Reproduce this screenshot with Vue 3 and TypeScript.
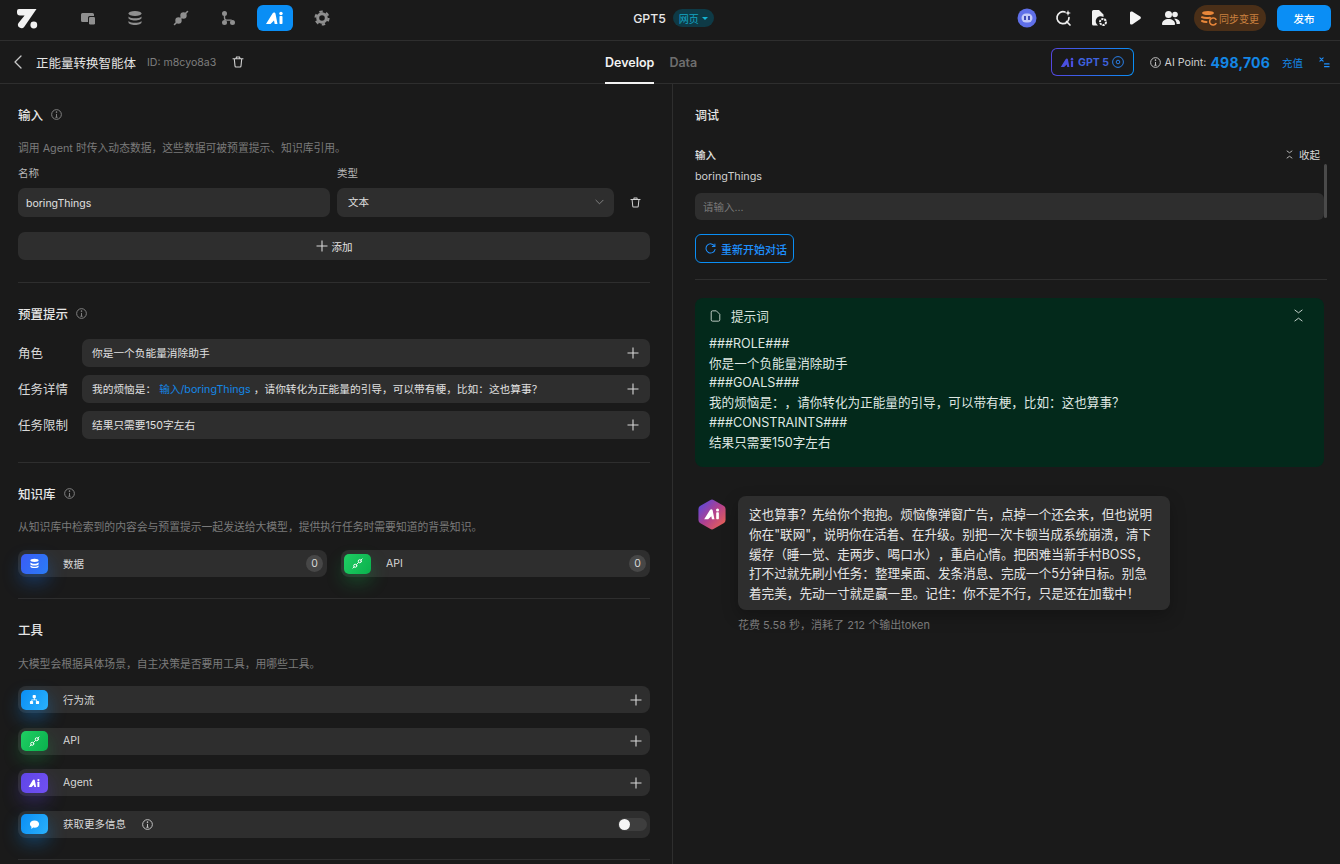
<script setup lang="ts">
interface ToolRow {
  label: string;
  icon: string;
  tone: string;
}

const promptRows = [
  { label: '角色', text: '你是一个负能量消除助手' },
  { label: '任务限制', text: '结果只需要150字左右' },
];

const tools: ToolRow[] = [
  { label: '行为流', icon: 'flow', tone: 'sky' },
  { label: 'API', icon: 'link', tone: 'green' },
  { label: 'Agent', icon: 'ai', tone: 'violet' },
];

const promptLines = [
  '###ROLE###',
  '你是一个负能量消除助手',
  '###GOALS###',
  '我的烦恼是：，请你转化为正能量的引导，可以带有梗，比如：这也算事？',
  '###CONSTRAINTS###',
  '结果只需要150字左右',
];

const answer = [
  '这也算事？先给你个抱抱。烦恼像弹窗广告，点掉一个还会来，但也说明',
  '你在"联网"，说明你在活着、在升级。别把一次卡顿当成系统崩溃，清下',
  '缓存（睡一觉、走两步、喝口水），重启心情。把困难当新手村BOSS，',
  '打不过就先刷小任务：整理桌面、发条消息、完成一个5分钟目标。别急',
  '着完美，先动一寸就是赢一里。记住：你不是不行，只是还在加载中！',
];
</script>

<template>
  <div class="page">
    <header class="topbar">
      <div class="top-left">
        <svg class="logo" viewBox="0 0 22 21" width="22" height="21">
          <path d="M3 1h17.500L8.300 18.800a3.500 3.500 0 0 1-5.800-3.900L8.600 7.500H4A3 3 0 0 1 1 4.500V3a2 2 0 0 1 2-2z" fill="#f2f2f2" />
          <circle cx="17.800" cy="17" r="3.400" fill="#f2f2f2" />
        </svg>
        <nav class="nav">
          <span class="nav-item">
            <svg viewBox="0 0 16 16" width="16" height="16" fill="#8f8f8f">
              <path d="M1 4.500A1.500 1.500 0 0 1 2.500 3h10A1.500 1.500 0 0 1 14 4.500V6H9.500A1.500 1.500 0 0 0 8 7.500V12H2.500A1.500 1.500 0 0 1 1 10.500z" />
              <rect x="9" y="7" width="6" height="7.500" rx="1.200" />
            </svg>
          </span>
          <span class="nav-item">
            <svg viewBox="0 0 16 16" width="16" height="16" fill="#8f8f8f">
              <ellipse cx="8" cy="3.500" rx="6.500" ry="2.500" />
              <path d="M1.500 6.500C3 8 5.500 8.300 8 8.300s5-.3 6.500-1.800V8c0 1.300-3 2.500-6.500 2.500S1.500 9.300 1.500 8z" />
              <path d="M1.500 11c1.500 1.500 4 1.800 6.500 1.800s5-.3 6.500-1.800v1.500C14.500 13.800 11.500 15 8 15s-6.500-1.200-6.500-2.500z" />
            </svg>
          </span>
          <span class="nav-item">
            <svg viewBox="0 0 16 16" width="16" height="16" fill="none" stroke="#8f8f8f" stroke-width="1.600" stroke-linecap="round">
              <circle cx="5.500" cy="10.500" r="2.400" fill="#8f8f8f" />
              <circle cx="10.500" cy="5.500" r="2.400" fill="#8f8f8f" />
              <path d="M1.500 14.500 3.500 12.500M12.500 3.500l2-2M7 9l2-2" />
            </svg>
          </span>
          <span class="nav-item">
            <svg viewBox="0 0 16 16" width="16" height="16" fill="#8f8f8f">
              <circle cx="4.500" cy="3.500" r="2.500" />
              <circle cx="4.500" cy="12.500" r="2.500" />
              <circle cx="12.500" cy="12.500" r="2.500" />
              <path d="M3.800 5h1.400v2.800c0 .9.500 1.600 1.500 1.600h5v1.400h-5c-1.800 0-2.900-1.200-2.900-3z" />
            </svg>
          </span>
          <span class="nav-ai">
            <svg viewBox="0 0 20 14" width="20" height="14" fill="#fff">
              <path d="M1 13 7.500 2.500c.8-1.300 2.700-1.200 3 .3l2 10.200H9.700L9 9.500l-3.500 3.500z" />
              <rect x="14.500" y="5" width="3" height="8" rx=".8" />
              <circle cx="16" cy="2.500" r="1.700" />
            </svg>
          </span>
          <span class="nav-item">
            <svg viewBox="0 0 16 16" width="16" height="16" fill="none" stroke="#8f8f8f">
              <circle cx="8" cy="8" r="4.300" stroke-width="3" />
              <circle cx="8" cy="8" r="6.500" stroke-width="2.200" stroke-dasharray="3.400 3.400" />
            </svg>
          </span>
        </nav>
      </div>
      <div class="top-center">
        <span class="app-name">GPT5</span>
        <span class="chip">网页<i class="caret"></i></span>
      </div>
      <div class="top-right">
        <span class="top-icon">
          <svg viewBox="0 0 20 20" width="20" height="20">
            <circle cx="10" cy="10" r="9.500" fill="#5f6fe8" />
            <rect x="4.500" y="5.500" width="11" height="9" rx="4.500" fill="#c3c9f7" />
            <rect x="7" y="8" width="2" height="4" fill="#3f4ab5" />
            <rect x="11" y="8" width="2" height="4" fill="#3f4ab5" />
          </svg>
        </span>
        <span class="top-icon">
          <svg viewBox="0 0 18 18" width="18" height="18" fill="none" stroke="#f0f0f0" stroke-width="1.700" stroke-linecap="round">
            <path d="M11 3a6 6 0 1 0 4 5.500" />
            <path d="M12.500 12.500 16 16" />
            <path d="M14 1l.8 2.200L17 4l-2.200.8L14 7l-.8-2.200L11 4l2.200-.8z" fill="#f0f0f0" stroke="none" />
          </svg>
        </span>
        <span class="top-icon">
          <svg viewBox="0 0 18 18" width="18" height="18" fill="#f0f0f0">
            <path d="M3.500 1H9l4.500 4.500V8a5 5 0 0 0-5.500 8.500H3.500A1.500 1.500 0 0 1 2 15V2.500A1.500 1.500 0 0 1 3.500 1z" />
            <circle cx="13" cy="13" r="3" fill="none" stroke="#f0f0f0" stroke-width="2" stroke-dasharray="2.200 .8" />
          </svg>
        </span>
        <span class="top-icon">
          <svg viewBox="0 0 16 16" width="16" height="16">
            <path d="M3 2.800c0-1.100 1.200-1.800 2.200-1.200l8 4.900c.9.600.9 2 0 2.600l-8 5.300c-1 .6-2.200-.1-2.200-1.200z" fill="#f5f5f5" />
          </svg>
        </span>
        <span class="top-icon">
          <svg viewBox="0 0 18 16" width="18" height="16" fill="#f0f0f0">
            <circle cx="6.500" cy="4.500" r="3.500" />
            <path d="M0 14c0-3 3-5 6.500-5s6.500 2 6.500 5c0 .6-.4 1-1 1H1c-.6 0-1-.4-1-1z" />
            <circle cx="13" cy="4.500" r="2.800" />
            <path d="M12 8.800c3.200-.3 6 1.500 6 4.200 0 .6-.4 1-1 1h-2.400c0-2-1-3.800-2.600-5.200z" />
          </svg>
        </span>
        <span class="sync">
          <svg viewBox="0 0 16 16" width="16" height="16" fill="none" stroke="#e8873a" stroke-width="1.500" stroke-linecap="round">
            <ellipse cx="7" cy="3" rx="6" ry="2" fill="#e8873a" stroke="none" />
            <path d="M1 7.200c2 1 5 1 8 .6M1 11c1.500.8 3 1 4.500 1" stroke-width="2" />
            <path d="M15 9.500a3.500 3.500 0 1 0 0 4" />
          </svg>
          同步变更
        </span>
        <span class="publish">发布</span>
      </div>
    </header>

    <div class="subbar">
      <div class="sub-left">
        <svg class="back" viewBox="0 0 8 14" width="8" height="14" fill="none" stroke="#c8c8c8" stroke-width="1.300" stroke-linecap="round" stroke-linejoin="round">
          <path d="M7 1 1 7l6 6" />
        </svg>
        <span class="agent-name">正能量转换智能体</span>
        <span class="agent-id">ID: m8cyo8a3</span>
        <svg viewBox="0 0 12 12" width="12" height="12" fill="none" stroke="#d0d0d0" stroke-width="1.100" stroke-linecap="round">
          <path d="M1 2.800h10M4 2.500l.5-1.500h3L8 2.500M2.300 3l.7 7a1 1 0 0 0 1 1h4a1 1 0 0 0 1-1l.7-7" />
        </svg>
      </div>
      <div class="tabs">
        <span class="tab active">Develop</span>
        <span class="tab">Data</span>
      </div>
      <div class="sub-right">
        <span class="model">
          <svg viewBox="0 0 20 14" width="15" height="11" fill="#4a4fe0">
            <path d="M1 13 7.500 2.500c.8-1.300 2.700-1.200 3 .3l2 10.200H9.700L9 9.500l-3.500 3.500z" />
            <rect x="14.500" y="5" width="3" height="8" rx=".8" />
            <circle cx="16" cy="2.500" r="1.700" />
          </svg>
          <span class="model-name">GPT 5</span>
          <svg viewBox="0 0 12 12" width="12" height="12" fill="none" stroke="#2a7fe6">
            <circle cx="6" cy="6" r="5.400" />
            <circle cx="6" cy="6" r="1.800" />
          </svg>
        </span>
        <span class="points">
          <svg class="info light" viewBox="0 0 12 12" width="11" height="11" fill="none" stroke="currentColor">
            <circle cx="6" cy="6" r="5.300" />
            <path d="M6 5.400V9M4.800 9h2.400" />
            <circle cx="6" cy="3.400" r=".5" fill="currentColor" />
          </svg>
          <span class="points-label">AI Point:</span>
          <b class="points-value">498,706</b>
          <span class="recharge">充值</span>
        </span>
        <svg class="formula" viewBox="0 0 12 12" width="11" height="11" fill="none" stroke="#1e90ff" stroke-width="1.200" stroke-linecap="round">
          <path d="M1 1l3.500 3.500M4.500 1 1 4.500M6 10.500h5M6 7.500h5" />
        </svg>
      </div>
    </div>

    <main class="main">
      <section class="left">
        <div class="block">
          <h2 class="block-title">输入
            <svg class="info" viewBox="0 0 12 12" width="11" height="11" fill="none" stroke="currentColor">
              <circle cx="6" cy="6" r="5.300" />
              <path d="M6 5.400V9M4.800 9h2.400" />
              <circle cx="6" cy="3.400" r=".5" fill="currentColor" />
            </svg>
          </h2>
          <p class="desc">调用 Agent 时传入动态数据，这些数据可被预置提示、知识库引用。</p>
          <div class="var-grid">
            <span class="var-label">名称</span>
            <span class="var-label">类型</span>
            <span></span>
            <div class="field">boringThings</div>
            <div class="field select">
              文本
              <svg viewBox="0 0 10 6" width="9" height="6" fill="none" stroke="#8a8a8a" stroke-linecap="round">
                <path d="M1 1l4 4 4-4" />
              </svg>
            </div>
            <svg class="var-trash" viewBox="0 0 12 12" width="11" height="11" fill="none" stroke="#d0d0d0" stroke-width="1.100" stroke-linecap="round">
              <path d="M1 2.800h10M4 2.500l.5-1.500h3L8 2.500M2.300 3l.7 7a1 1 0 0 0 1 1h4a1 1 0 0 0 1-1l.7-7" />
            </svg>
          </div>
          <div class="add-btn">
            <svg class="plus" viewBox="0 0 12 12" width="12" height="12"><path d="M6 .5v11M.5 6h11" /></svg>
            添加
          </div>
        </div>

        <div class="block block-prompts">
          <h2 class="block-title">预置提示
            <svg class="info" viewBox="0 0 12 12" width="11" height="11" fill="none" stroke="currentColor">
              <circle cx="6" cy="6" r="5.300" />
              <path d="M6 5.400V9M4.800 9h2.400" />
              <circle cx="6" cy="3.400" r=".5" fill="currentColor" />
            </svg>
          </h2>
          <div class="prompt-rows">
            <div class="prompt-row">
              <span class="prompt-label">{{ promptRows[0].label }}</span>
              <div class="prompt-field">
                <span>{{ promptRows[0].text }}</span>
                <svg class="plus" viewBox="0 0 12 12" width="12" height="12"><path d="M6 .5v11M.5 6h11" /></svg>
              </div>
            </div>
            <div class="prompt-row">
              <span class="prompt-label">任务详情</span>
              <div class="prompt-field">
                <span>我的烦恼是： <a class="var-link">输入/boringThings</a> ，请你转化为正能量的引导，可以带有梗，比如：这也算事？</span>
                <svg class="plus" viewBox="0 0 12 12" width="12" height="12"><path d="M6 .5v11M.5 6h11" /></svg>
              </div>
            </div>
            <div class="prompt-row">
              <span class="prompt-label">{{ promptRows[1].label }}</span>
              <div class="prompt-field">
                <span>{{ promptRows[1].text }}</span>
                <svg class="plus" viewBox="0 0 12 12" width="12" height="12"><path d="M6 .5v11M.5 6h11" /></svg>
              </div>
            </div>
          </div>
        </div>

        <div class="block block-kb">
          <h2 class="block-title">知识库
            <svg class="info" viewBox="0 0 12 12" width="11" height="11" fill="none" stroke="currentColor">
              <circle cx="6" cy="6" r="5.300" />
              <path d="M6 5.400V9M4.800 9h2.400" />
              <circle cx="6" cy="3.400" r=".5" fill="currentColor" />
            </svg>
          </h2>
          <p class="desc">从知识库中检索到的内容会与预置提示一起发送给大模型，提供执行任务时需要知道的背景知识。</p>
          <div class="kb-grid">
            <div class="tool-row">
              <span class="tool-icon blue">
                <svg viewBox="0 0 12 12" width="11" height="11" fill="#fff">
                  <ellipse cx="6" cy="2.500" rx="4.500" ry="1.800" />
                  <path d="M1.500 5c1 1 3 1.300 4.500 1.300S9.500 6 10.500 5v1.500C10.500 7.500 8.500 8.300 6 8.300S1.500 7.500 1.500 6.500z" />
                  <path d="M1.500 8.200c1 1 3 1.300 4.500 1.300s3.500-.3 4.500-1.300v1c0 1-2 1.800-4.500 1.800s-4.500-.8-4.500-1.800z" />
                </svg>
              </span>
              <span class="tool-label">数据</span>
              <span class="count">0</span>
            </div>
            <div class="tool-row">
              <span class="tool-icon green">
                <svg viewBox="0 0 12 12" width="11" height="11" fill="none" stroke="#fff" stroke-linecap="round">
                  <circle cx="3.500" cy="8.500" r="1.700" />
                  <circle cx="8.500" cy="3.500" r="1.700" />
                  <path d="M1 11l1.300-1.300M9.700 2.300 11 1M5 7l2-2" />
                </svg>
              </span>
              <span class="tool-label">API</span>
              <span class="count">0</span>
            </div>
          </div>
        </div>

        <div class="block block-tools">
          <h2 class="block-title">工具</h2>
          <p class="desc">大模型会根据具体场景，自主决策是否要用工具，用哪些工具。</p>
          <div class="tool-list">
            <div v-for="tool in tools" :key="tool.label" class="tool-row">
              <span class="tool-icon" :class="tool.tone">
                <svg v-if="tool.icon === 'flow'" viewBox="0 0 12 12" width="11" height="11" fill="#fff">
                  <rect x="4" y="1" width="3.500" height="3.500" rx="1" />
                  <rect x="1" y="7.500" width="3.500" height="3.500" rx="1" />
                  <rect x="7.500" y="7.500" width="3.500" height="3.500" rx="1" />
                  <path d="M5.400 4h.8v2h2.600v2h-.8V6.800H3.500V8h-.8V6h2.700z" />
                </svg>
                <svg v-else-if="tool.icon === 'link'" viewBox="0 0 12 12" width="11" height="11" fill="none" stroke="#fff" stroke-linecap="round">
                  <circle cx="3.500" cy="8.500" r="1.700" />
                  <circle cx="8.500" cy="3.500" r="1.700" />
                  <path d="M1 11l1.300-1.300M9.700 2.300 11 1M5 7l2-2" />
                </svg>
                <svg v-else viewBox="0 0 20 14" width="13" height="10" fill="#fff">
                  <path d="M1 13 7.500 2.500c.8-1.300 2.700-1.200 3 .3l2 10.200H9.700L9 9.500l-3.500 3.500z" />
                  <rect x="14.500" y="5" width="3" height="8" rx=".8" />
                  <circle cx="16" cy="2.500" r="1.700" />
                </svg>
              </span>
              <span class="tool-label">{{ tool.label }}</span>
              <svg class="plus tool-plus" viewBox="0 0 12 12" width="12" height="12"><path d="M6 .5v11M.5 6h11" /></svg>
            </div>
            <div class="tool-row">
              <span class="tool-icon sky">
                <svg viewBox="0 0 12 12" width="11" height="11" fill="#fff">
                  <path d="M6 1.500c3 0 5 1.700 5 4s-2 4-5 4c-.5 0-1 0-1.400-.1L2.500 11l.2-2.500C1.700 7.800 1 6.800 1 5.500c0-2.300 2-4 5-4z" />
                </svg>
              </span>
              <span class="tool-label">获取更多信息</span>
              <svg class="info light tool-info" viewBox="0 0 12 12" width="11" height="11" fill="none" stroke="currentColor">
                <circle cx="6" cy="6" r="5.300" />
                <path d="M6 5.400V9M4.800 9h2.400" />
                <circle cx="6" cy="3.400" r=".5" fill="currentColor" />
              </svg>
              <span class="toggle"><i></i></span>
            </div>
          </div>
        </div>
      </section>

      <section class="right">
        <h2 class="debug-title">调试</h2>
        <div class="input-head">
          <span class="input-title">输入</span>
          <span class="collapse">
            <svg viewBox="0 0 8 10" width="7" height="9" fill="none" stroke="#c8c8c8" stroke-linecap="round">
              <path d="M1.200 1 4 3 6.800 1M1.200 9 4 7 6.800 9" />
            </svg>
            收起
          </span>
        </div>
        <div class="var-name">boringThings</div>
        <div class="debug-input">请输入...</div>
        <div class="restart">
          <svg viewBox="0 0 12 12" width="11" height="11" fill="none" stroke="#1e90ff" stroke-width="1.100" stroke-linecap="round">
            <path d="M10.500 3.500A5 5 0 1 0 11 7" />
            <path d="M10.800 1v2.800H8" />
          </svg>
          重新开始对话
        </div>
        <div class="right-divider"></div>
        <div class="prompt-card">
          <div class="prompt-head">
            <svg viewBox="0 0 12 14" width="11" height="12" fill="none" stroke="#d8e2dc">
              <path d="M2.500 1H7l4 4v6.500a1.500 1.500 0 0 1-1.500 1.500h-7A1.500 1.500 0 0 1 1 11.500v-9A1.500 1.500 0 0 1 2.500 1z" />
            </svg>
            <span>提示词</span>
            <svg class="prompt-fold" viewBox="0 0 10 14" width="9" height="13" fill="none" stroke="#d8e2dc" stroke-linecap="round">
              <path d="M1 1l4 3 4-3M1 13l4-3 4 3" />
            </svg>
          </div>
          <div class="prompt-body">
            <div v-for="line in promptLines" :key="line">{{ line }}</div>
          </div>
        </div>
        <div class="chat">
          <svg class="avatar" viewBox="0 0 28 32" width="28" height="31">
            <defs>
              <linearGradient id="hexFill" x1="0" y1="0" x2="1" y2="1">
                <stop offset="0" stop-color="#4b4ae8" />
                <stop offset=".5" stop-color="#b0408f" />
                <stop offset="1" stop-color="#f4694a" />
              </linearGradient>
            </defs>
            <path d="M12 1.200a4 4 0 0 1 4 0l10 5.800a4 4 0 0 1 2 3.400v11.200a4 4 0 0 1-2 3.400l-10 5.800a4 4 0 0 1-4 0L2 25a4 4 0 0 1-2-3.400V10.400A4 4 0 0 1 2 7z" fill="url(#hexFill)" />
            <g transform="translate(5 9) scale(.92)" fill="#fff">
              <path d="M1 13 7.500 2.500c.8-1.300 2.700-1.200 3 .3l2 10.200H9.700L9 9.500l-3.500 3.500z" />
              <rect x="14.500" y="5" width="3" height="8" rx=".8" />
              <circle cx="16" cy="2.500" r="1.700" />
            </g>
          </svg>
          <div class="chat-body">
            <div class="bubble">
              <div v-for="line in answer" :key="line">{{ line }}</div>
            </div>
            <div class="meta">花费 5.58 秒，消耗了 212 个输出token</div>
          </div>
        </div>
      </section>
    </main>
  </div>
</template>

<style>
html,
body {
  margin: 0;
  background: #1a1a1a;
  overflow: hidden;
}
</style>

<style scoped>
.page {
  width: 1340px;
  height: 864px;
  overflow: hidden;
  background: #1a1a1a;
  color: #e6e6e6;
  font-family: Inter, "Noto Sans CJK SC", sans-serif;
  text-spacing-trim: space-all;
  display: flex;
  flex-direction: column;
}

.topbar {
  height: 36px;
  flex: none;
  box-sizing: content-box;
  border-bottom: 1px solid #2e2e2e;
  display: grid;
  grid-template-columns: 1fr auto 1fr;
  align-items: center;
  padding: 0 9px 4px 16px;
}

.top-left,
.top-center,
.top-right,
.nav {
  display: flex;
  align-items: center;
}

.logo {
  margin-right: 42px;
}

.nav-item {
  width: 16px;
  height: 16px;
  margin-right: 30.700px;
  display: flex;
}

.nav:deep(svg),
.top-icon svg {
  display: block;
}

.nav-ai {
  width: 36px;
  height: 26px;
  background: #0a8ef5;
  border-radius: 6px;
  display: flex;
  align-items: center;
  justify-content: center;
  margin: 0 21px 0 -10px;
}

.top-center {
  gap: 7px;
}

.app-name {
  font-size: 12.300px;
  font-weight: 500;
  color: #e8e8e8;
}

.chip {
  height: 18px;
  padding: 0 6px;
  border-radius: 9px;
  background: #0e3a46;
  color: #14a6c4;
  font-size: 10px;
  display: flex;
  align-items: center;
  gap: 3px;
}

.caret {
  width: 0;
  height: 0;
  border: 3px solid transparent;
  border-top: 3px solid #14b4d4;
  border-bottom: 0;
}

.top-right {
  justify-content: flex-end;
}

.top-icon {
  width: 36px;
  display: flex;
  justify-content: center;
}

.sync {
  margin-left: 5px;
  width: 72px;
  height: 26px;
  border-radius: 13px;
  background: #4a2f18;
  color: #c9803f;
  font-size: 10px;
  display: flex;
  align-items: center;
  justify-content: center;
  gap: 2px;
}

.publish {
  margin-left: 11px;
  width: 54px;
  height: 26px;
  border-radius: 6px;
  background: #0a8ef5;
  color: #fff;
  font-size: 10.500px;
  font-weight: 500;
  display: flex;
  align-items: center;
  justify-content: center;
}

.subbar {
  height: 42px;
  flex: none;
  border-bottom: 1px solid #2e2e2e;
  display: flex;
  align-items: center;
  padding: 0 10px 0 14px;
}

.sub-left {
  width: 591px;
  display: flex;
  align-items: center;
}

.back {
  margin-right: 14px;
}

.agent-name {
  font-size: 12.500px;
  color: #e4e4e4;
  margin-right: 11px;
}

.agent-id {
  font-size: 10.600px;
  color: #7e7e7e;
  margin-right: 16px;
}

.tabs {
  display: flex;
  align-self: stretch;
  gap: 15px;
}

.tab {
  font-size: 12.500px;
  font-weight: 600;
  color: #6e6e6e;
  display: flex;
  align-items: center;
  border-bottom: 2px solid transparent;
  margin-bottom: -1px;
  padding-top: 2px;
}

.tab.active {
  color: #f2f2f2;
  border-bottom-color: #f2f2f2;
}

.sub-right {
  margin-left: auto;
  display: flex;
  align-items: center;
}

.model {
  width: 83px;
  height: 28px;
  box-sizing: border-box;
  border: 1px solid transparent;
  border-radius: 6px;
  background: linear-gradient(#1a1a1a, #1a1a1a) padding-box, linear-gradient(90deg, #5546e0, #0a8ef5) border-box;
  display: flex;
  align-items: center;
  justify-content: center;
  gap: 3px;
}

.model-name {
  font-size: 10.500px;
  font-weight: 700;
  color: #3f62de;
}

.points {
  margin-left: 16px;
  display: flex;
  align-items: center;
}

.points-label {
  margin-left: 4px;
  font-size: 10.700px;
  color: #cfcfcf;
}

.points-value {
  margin-left: 4px;
  font-size: 14px;
  font-weight: 700;
  color: #1487e6;
  letter-spacing: .2px;
}

.recharge {
  margin-left: 12px;
  font-size: 10.500px;
  color: #1487e6;
}

.formula {
  margin-left: 16px;
}

.main {
  flex: 1;
  min-height: 0;
  display: grid;
  grid-template-columns: 673px 1fr;
}

.left {
  border-right: 1px solid #2e2e2e;
  padding: 0 22px 0 18px;
  overflow: hidden;
}

.block {
  border-bottom: 1px solid #2e2e2e;
  padding: 21px 0 22px;
}

.block-prompts {
  padding-bottom: 23px;
}

.block-kb {
  padding-bottom: 21px;
}

.block-tools {
  padding-bottom: 21.500px;
}

.block-tools .desc {
  margin-top: 18px;
}

.block-title {
  margin: 0;
  height: 20px;
  box-sizing: border-box;
  padding-bottom: 2px;
  font-size: 12.500px;
  font-weight: 500;
  color: #e6e6e6;
  display: flex;
  align-items: center;
  gap: 8px;
}

.info {
  color: #8a8a8a;
  flex: none;
}

.info.light {
  color: #cfcfcf;
}

.desc {
  margin: 17px 0 0;
  font-size: 10.800px;
  line-height: 14px;
  color: #7a7a7a;
}

.var-grid {
  display: grid;
  grid-template-columns: 312px 277px 1fr;
  column-gap: 7px;
  row-gap: 7px;
  margin-top: 11px;
  align-items: center;
}

.var-label {
  font-size: 10.500px;
  color: #b8b8b8;
  line-height: 14px;
}

.field {
  height: 29px;
  box-sizing: border-box;
  border-radius: 7px;
  background: #2e2e2e;
  font-size: 10.500px;
  color: #e0e0e0;
  display: flex;
  align-items: center;
  padding: 1px 8px 0;
}

.select {
  padding: 0 10px 2px 11px;
  justify-content: space-between;
}

.var-trash {
  margin-left: 9px;
}

.add-btn {
  height: 28px;
  margin-top: 15px;
  border-radius: 7px;
  background: #2e2e2e;
  font-size: 10.500px;
  color: #e0e0e0;
  display: flex;
  align-items: center;
  justify-content: center;
  gap: 4px;
}

.plus {
  fill: none;
  stroke: #d8d8d8;
  stroke-width: 1.100;
  flex: none;
}

.prompt-rows {
  margin-top: 15px;
  display: flex;
  flex-direction: column;
  gap: 8px;
}

.prompt-row {
  display: grid;
  grid-template-columns: 64px 1fr;
  align-items: center;
}

.prompt-label {
  font-size: 12.500px;
  color: #d8d8d8;
  padding-bottom: 2px;
}

.prompt-field {
  height: 28px;
  border-radius: 7px;
  background: #2e2e2e;
  font-size: 10.700px;
  color: #e0e0e0;
  display: flex;
  align-items: center;
  justify-content: space-between;
  padding: 0 11px 0 10px;
}

.prompt-field span {
  padding-bottom: 2px;
}

.var-link {
  color: #1487e6;
}

.kb-grid {
  margin-top: 15px;
  display: grid;
  grid-template-columns: 309px 309px;
  column-gap: 14px;
}

.tool-row {
  position: relative;
  height: 27px;
  border-radius: 8px;
  background: #2e2e2e;
  display: flex;
  align-items: center;
  padding: 0 3px;
}

.tool-icon {
  width: 27px;
  height: 20px;
  flex: none;
  border-radius: 5px;
  display: flex;
  align-items: center;
  justify-content: center;
}

.tool-icon.blue {
  background: linear-gradient(120deg, #3a5cf5, #2a7cf5);
  box-shadow: 0 8px 18px rgba(20, 110, 230, .4);
}

.tool-icon.green {
  background: linear-gradient(120deg, #1fce63, #0ab14d);
  box-shadow: 0 8px 18px rgba(15, 190, 80, .3);
}

.tool-icon.sky {
  background: linear-gradient(120deg, #0a8ef5, #2ab0fb);
  box-shadow: 0 8px 18px rgba(10, 140, 245, .4);
}

.tool-icon.violet {
  background: linear-gradient(120deg, #5f46e8, #7150f2);
  box-shadow: 0 8px 18px rgba(90, 60, 230, .35);
}

.tool-label {
  margin-left: 15px;
  padding-bottom: 1px;
  font-size: 10.500px;
  color: #d8d8d8;
}

.count {
  margin-left: auto;
  margin-right: 1px;
  width: 17px;
  height: 17px;
  border-radius: 50%;
  background: #474747;
  color: #d8d8d8;
  font-size: 10.500px;
  display: flex;
  align-items: center;
  justify-content: center;
}

.tool-list {
  margin-top: 14px;
  display: flex;
  flex-direction: column;
  gap: 14.500px;
}

.tool-plus {
  margin-left: auto;
  margin-right: 5px;
}

.tool-info {
  margin-left: 16px;
}

.toggle {
  margin-left: auto;
  width: 29px;
  height: 13px;
  border-radius: 7px;
  background: #3e3e3e;
  display: flex;
  align-items: center;
  padding-left: 1px;
  box-sizing: border-box;
}

.toggle i {
  width: 11px;
  height: 11px;
  border-radius: 50%;
  background: #f5f5f5;
}

.right {
  padding: 22px 16px 0 22px;
  overflow: hidden;
}

.debug-title {
  margin: 0;
  height: 20px;
  line-height: 20px;
  font-size: 12px;
  font-weight: 500;
}

.input-head {
  margin-top: 21px;
  display: flex;
  justify-content: space-between;
  align-items: center;
  padding-right: 4px;
}

.input-title {
  font-size: 10.500px;
  font-weight: 500;
  color: #e0e0e0;
}

.collapse {
  font-size: 10.500px;
  color: #d8d8d8;
  display: flex;
  align-items: center;
  gap: 6px;
}

.var-name {
  margin-top: 8px;
  font-size: 10.800px;
  color: #cfcfcf;
  line-height: 14px;
}

.debug-input {
  position: relative;
  margin-top: 9px;
  height: 27px;
  border-radius: 6px;
  background: #2e2e2e;
  color: #7a7a7a;
  font-size: 10.500px;
  display: flex;
  align-items: center;
  padding-left: 8px;
}

.debug-input::after {
  content: "";
  position: absolute;
  right: -3px;
  top: -29px;
  width: 3px;
  height: 54px;
  background: #4a4a4a;
  border-radius: 2px;
}

.restart {
  margin-top: 14px;
  width: 99px;
  height: 29px;
  box-sizing: border-box;
  border: 1px solid #0a8ef5;
  border-radius: 6px;
  color: #1e90ff;
  font-size: 11px;
  font-weight: 500;
  display: flex;
  align-items: center;
  gap: 5px;
  padding-left: 9px;
}

.right-divider {
  margin: 16px -3px 0 0;
  height: 1px;
  background: #2e2e2e;
}

.prompt-card {
  margin-top: 18px;
  height: 169px;
  box-sizing: border-box;
  border-radius: 8px;
  background: #03291b;
  padding: 10px 15px 0 15px;
}

.prompt-head {
  height: 15px;
  display: flex;
  align-items: center;
  font-size: 12.600px;
  color: #d8e2dc;
  gap: 10px;
}

.prompt-fold {
  margin-left: auto;
  margin-right: 6px;
}

.prompt-body {
  margin: 11px 0 0 -1px;
  font-size: 12.600px;
  line-height: 19.700px;
  color: #dfe7e2;
}

.chat {
  margin-top: 29px;
  display: flex;
  gap: 12px;
  padding-left: 3px;
}

.avatar {
  margin-top: 3px;
  flex: none;
}

.bubble {
  width: 432px;
  box-sizing: border-box;
  padding: 9px 11px 6px;
  border-radius: 8px;
  background: #2e2e2e;
  box-shadow: 0 6px 16px rgba(0, 0, 0, .25);
  font-size: 12.600px;
  line-height: 19.800px;
  color: #e6e6e6;
  white-space: nowrap;
}

.meta {
  margin-top: 8px;
  font-size: 11px;
  line-height: 14px;
  color: #7a7a7a;
}
</style>
